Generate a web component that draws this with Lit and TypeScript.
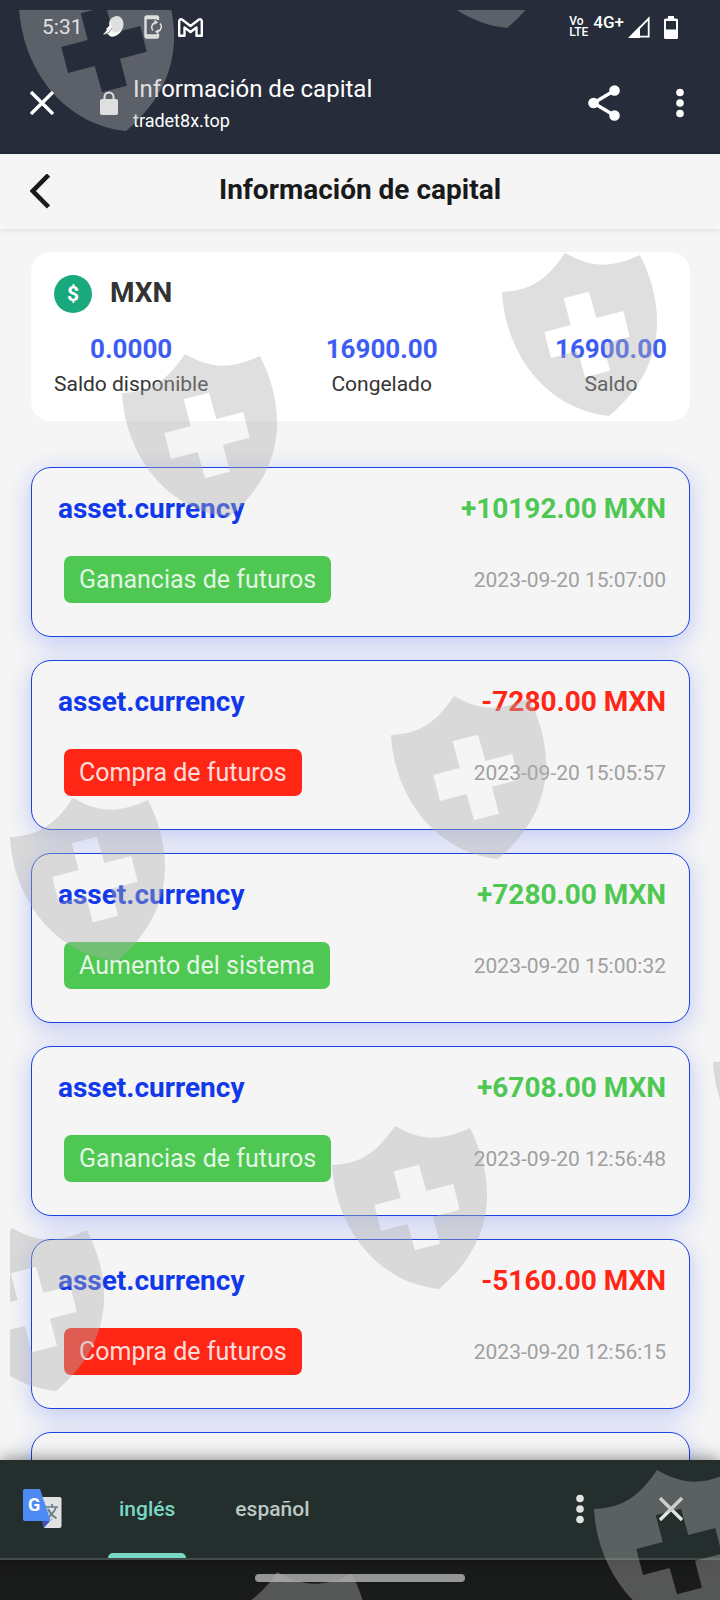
import { LitElement, html, css, svg } from "lit";
import { customElement, property } from "lit/decorators.js";

interface Movement {
  amount: string;
  kind: string;
  date: string;
}

const MOVEMENTS: Movement[] = [
  { amount: "+10192.00", kind: "Ganancias de futuros", date: "2023-09-20 15:07:00" },
  { amount: "-7280.00", kind: "Compra de futuros", date: "2023-09-20 15:05:57" },
  { amount: "+7280.00", kind: "Aumento del sistema", date: "2023-09-20 15:00:32" },
  { amount: "+6708.00", kind: "Ganancias de futuros", date: "2023-09-20 12:56:48" },
  { amount: "-5160.00", kind: "Compra de futuros", date: "2023-09-20 12:56:15" },
  { amount: "", kind: "", date: "" },
];

const BALANCES = [
  { value: "0.0000", label: "Saldo disponible" },
  { value: "16900.00", label: "Congelado" },
  { value: "16900.00", label: "Saldo" },
];

// Top-left corner of every shield on the watermark layer.
const SHIELDS = [
  [19, -32], [400, -135], [502, 253], [122, 354], [391, 696], [10, 798],
  [713, 1023], [332, 1126], [-51, 1228], [594, 1470], [214, 1572],
];

const SHIELD_PATH =
  "M0 39C25 37.500 42 31 63 0C90 15 108 15.500 138 2C162 50 168 112 107 163C42 156 3 98 0 39Z" +
  "M61.700 45.300L68.700 72L42.300 79L49 105L75.700 98L83 124.300L108 117.700L101 90.700L127.700 83.700L121.300 58L94.300 65L87 38.700Z";

const dots = html`<svg width="8" height="30" viewBox="0 0 8 30" fill="currentColor" aria-hidden="true">
  <circle cx="4" cy="4.500" r="3.800" /><circle cx="4" cy="15" r="3.800" /><circle cx="4" cy="25.500" r="3.800" />
</svg>`;

const cross = html`<svg width="24" height="24" viewBox="0 0 24 24" fill="none" stroke="currentColor" stroke-width="3.400" aria-hidden="true">
  <path d="M1 1L23 23M23 1L1 23" />
</svg>`;

@customElement("status-bar")
class StatusBar extends LitElement {
  static styles = css`
    :host {
      display: flex;
      align-items: center;
      justify-content: space-between;
      height: 54px;
      padding: 0 42px;
      box-sizing: border-box;
    }
    .group { display: flex; align-items: center; }
    .time { font-size: 21px; line-height: 24px; margin-right: 20px; }
    .phone { margin: 0 16px 0 20px; }
    .volte { font-size: 12px; line-height: 11px; font-weight: 500; margin-right: 5px; }
    .net { font-size: 17px; line-height: 20px; padding-bottom: 10px; font-weight: 500; margin-right: 4px; }
    .signal { margin-right: 14px; }
    svg { display: block; }
  `;
  render() {
    return html`
      <div class="group">
        <span class="time">5:31</span>
        <svg width="21" height="22" viewBox="0 0 21 22" fill="#fff">
          <path d="M7 4C9 1 12 0 14 0C18 0 20.500 4 20.500 8C20.500 14 16 19 11 20.500C8 21 6 20 5 18L0 18.500L4 14L3 13L6.500 9.500C6 8 6.200 6 7 4Z" />
          <path d="M1 18.500L6 16.500L9 12" stroke="#5c636a" fill="none" stroke-width=".8" />
        </svg>
        <svg class="phone" width="18" height="24" viewBox="0 0 18 24" fill="none" stroke="#fff">
          <path d="M14 5V2.500Q14 1.500 13 1.500H3Q1.500 1.500 1.500 3V21Q1.500 22.500 3 22.500H13Q14 22.500 14 21.500V19" stroke-width="2.400" />
          <path d="M2 3H14M2 20.500H14" stroke-width="2.600" />
          <path d="M11 7.500A5 5 0 0 0 9 15.500M14 16.500A5 5 0 0 0 16 8.500" stroke-width="1.500" />
          <path d="M10.500 4.500L14 7.300L10.500 10ZM14.500 14L11 16.700L14.500 19.500Z" fill="#fff" stroke="none" />
        </svg>
        <svg width="25" height="19" viewBox="0 0 25 19" fill="none" stroke="#fff" stroke-width="2.400" stroke-linejoin="round">
          <path d="M1.200 3Q2 .5 4 1.500L12.500 8L21 1.500Q23 .5 23.800 3V17.800H18.500V9.500L12.500 14L6.500 9.500V17.800H1.200Z" />
        </svg>
      </div>
      <div class="group">
        <span class="volte">Vo<br />LTE</span>
        <span class="net">4G+</span>
        <svg class="signal" width="22" height="22" viewBox="0 0 22 22">
          <path d="M20.700 2.500V20.700H3Z" fill="none" stroke="#fff" stroke-width="1.800" />
          <path d="M0 22L12 10V22Z" fill="#fff" />
        </svg>
        <svg width="14" height="23" viewBox="0 0 14 23">
          <path d="M4 0H10V2.500H12.500Q14 2.500 14 4V21.500Q14 23 12.500 23H1.500Q0 23 0 21.500V4Q0 2.500 1.500 2.500H4ZM2 5V13.500H12V5Z" fill="#fff" fill-rule="evenodd" />
        </svg>
      </div>
    `;
  }
}

@customElement("movement-card")
class MovementCard extends LitElement {
  @property({ attribute: false }) item!: Movement;
  static styles = css`
    :host {
      display: block;
      box-sizing: border-box;
      flex: none;
      min-height: 170px;
      padding: 24px 23px 33px 26px;
      border: 1px solid #1a42e0;
      border-radius: 20px;
      background: #f5f5f5;
      box-shadow: 0 6px 24px rgba(20, 60, 255, 0.24);
    }
    .row { display: flex; align-items: center; justify-content: space-between; }
    .top { font-size: 28px; line-height: 34px; font-weight: 700; margin-bottom: 30px; }
    .name { color: #1138eb; }
    .up { color: #4fc853; }
    .down { color: #ff2615; }
    .tag {
      margin-left: 6px;
      padding: 0 15px;
      border-radius: 7px;
      font-size: 25px;
      line-height: 47px;
    }
    .tag.up { background: #4fc853; color: rgba(255, 255, 255, 0.86); }
    .tag.down { background: #ff2615; color: rgba(255, 255, 255, 0.86); }
    .date { font-size: 21px; line-height: 26px; color: #a0a0a0; }
  `;
  render() {
    const { amount, kind, date } = this.item;
    if (!amount) return html``;
    const tone = amount.startsWith("+") ? "up" : "down";
    return html`
      <div class="row top">
        <span class="name">asset.currency</span>
        <span class=${tone}>${amount} MXN</span>
      </div>
      <div class="row">
        <span class="tag ${tone}">${kind}</span>
        <time class="date">${date}</time>
      </div>
    `;
  }
}

@customElement("app-root")
class AppRoot extends LitElement {
  static styles = css`
    :host {
      display: flex;
      flex-direction: column;
      position: relative;
      height: 100vh;
      overflow: hidden;
      background: #f5f5f5;
      color: #333;
      font-family: Roboto, "Liberation Sans", sans-serif;
    }
    button {
      display: flex;
      align-items: center;
      justify-content: center;
      padding: 0;
      border: 0;
      background: none;
      color: inherit;
      font: inherit;
    }
    svg { display: block; }
    .browser { flex: none; background: #262c3a; color: #fff; border-bottom: 2px solid #202935; }
    .toolbar { display: flex; align-items: center; height: 98px; padding: 0 36px 0 30px; }
    .lock { margin: 0 15px 0 46px; }
    .site { flex: 1; padding-top: 4px; }
    .site-title { font-size: 24px; line-height: 32px; }
    .site-url { font-size: 18px; line-height: 32px; }
    .share { margin-right: 56px; }

    .header {
      flex: none;
      display: grid;
      grid-template-columns: 20px 1fr 20px;
      align-items: center;
      height: 75px;
      padding: 0 30px;
      box-shadow: 0 1px 6px rgba(0, 0, 0, 0.1);
      color: #1a1a1a;
    }
    .title { margin: 0; padding-bottom: 4px; text-align: center; font-size: 28px; line-height: 36px; font-weight: 700; }

    .content {
      flex: 1;
      min-height: 0;
      overflow: hidden;
      display: flex;
      flex-direction: column;
      gap: 23px;
      padding: 23px 30px 0 31px;
    }
    .summary {
      flex: none;
      padding: 23px 23px 20px;
      margin-bottom: 23px;
      border-radius: 20px;
      background: #fff;
    }
    .currency { display: flex; align-items: center; gap: 18px; height: 38px; margin-bottom: 18px; }
    .code { margin: 0; padding-bottom: 2px; font-size: 28px; line-height: 36px; font-weight: 700; }
    .balances { display: flex; justify-content: space-between; margin: 0; }
    .balance { display: flex; flex-direction: column-reverse; text-align: center; }
    .value { margin: 0; font-size: 26px; line-height: 36px; font-weight: 700; color: #3d5df2; }
    .label { font-size: 21px; line-height: 34px; }

    .translate {
      flex: none;
      position: relative;
      display: flex;
      align-items: center;
      height: 98px;
      padding: 0 37px 0 22px;
      border-bottom: 2px solid #424b49;
      background: #242e2d;
      box-shadow: 0 0 16px rgba(0, 0, 0, 0.5);
      color: #e1e4e2;
    }
    .tabs { display: flex; flex: 1; gap: 38px; align-self: stretch; padding-left: 46px; }
    .tab { position: relative; padding: 0 11px; font-size: 21px; font-weight: 500; color: #bcc9c3; }
    .tab.active { color: #78d8c3; }
    .tab.active::after {
      content: "";
      position: absolute;
      left: 0;
      right: 0;
      bottom: 0;
      height: 5px;
      border-radius: 5px 5px 0 0;
      background: #78d8c3;
    }
    .options { margin-right: 75px; }
    .nav { flex: none; display: flex; justify-content: center; height: 26px; padding-top: 14px; background: #1a1c1b; }
    .handle { width: 210px; height: 8px; border-radius: 4px; background: #969897; }

    .watermark {
      position: absolute;
      inset: 10px 0 0 10px;
      overflow: hidden;
      pointer-events: none;
    }
    .watermark svg { width: 100%; height: 100%; }
  `;

  render() {
    return html`
      <div class="browser">
        <status-bar></status-bar>
        <div class="toolbar">
          <button aria-label="Cerrar">${cross}</button>
          <svg class="lock" width="18" height="24" viewBox="0 0 18 24" fill="#fff">
            <path d="M2 8H16Q18 8 18 10V22Q18 24 16 24H2Q0 24 0 22V10Q0 8 2 8Z" />
            <path d="M4.500 9V6A4.500 4.500 0 0 1 13.500 6V9" fill="none" stroke="#fff" stroke-width="2" />
          </svg>
          <div class="site">
            <div class="site-title">Información de capital</div>
            <div class="site-url">tradet8x.top</div>
          </div>
          <button class="share" aria-label="Compartir">
            <svg width="32" height="36" viewBox="0 0 32 36" fill="#fff">
              <path d="M26.500 5.500L5.500 18L26.500 30.500" fill="none" stroke="#fff" stroke-width="3.400" />
              <circle cx="26.500" cy="5.500" r="5.300" /><circle cx="5.500" cy="18" r="5.300" /><circle cx="26.500" cy="30.500" r="5.300" />
            </svg>
          </button>
          <button aria-label="Más opciones">${dots}</button>
        </div>
      </div>

      <header class="header">
        <button aria-label="Volver">
          <svg width="20" height="36" viewBox="0 0 20 36" fill="none" stroke="#1a1a1a" stroke-width="4.600">
            <path d="M18.500 1L2.800 17L18.500 33" />
          </svg>
        </button>
        <h1 class="title">Información de capital</h1>
      </header>

      <main class="content">
        <section class="summary">
          <div class="currency">
            <svg width="38" height="38" viewBox="0 0 38 38">
              <circle cx="19" cy="19" r="19" fill="#1aa97c" />
              <text x="19" y="26" text-anchor="middle" font-size="21" font-weight="700" fill="#fff">$</text>
            </svg>
            <h2 class="code">MXN</h2>
          </div>
          <dl class="balances">
            ${BALANCES.map(
              (b) => html`<div class="balance"><dt class="label">${b.label}</dt><dd class="value">${b.value}</dd></div>`
            )}
          </dl>
        </section>
        ${MOVEMENTS.map((m) => html`<movement-card .item=${m}></movement-card>`)}
      </main>

      <div class="translate">
        <svg width="40" height="40" viewBox="0 0 40 40">
          <path d="M17 8H37.500Q39.500 8 39.500 10V37Q39.500 39 37.500 39H22Z" fill="#e1e1e1" />
          <path d="M20 8L31 31L26 32Z" fill="#c9cacb" />
          <g fill="none" stroke="#607d8b" stroke-width="1.700">
            <path d="M23 18H36M30 15V18M34 18.500Q31.500 25 24 30M26 20Q29 26 34.500 29.500" />
          </g>
          <path d="M20 32H28L22 39Z" fill="#3f51b5" />
          <path d="M3 0H18L28.500 32H3Q1 32 1 30V2Q1 0 3 0Z" fill="#4c8bf5" />
          <text x="6" y="22" font-size="18" font-weight="700" fill="#fff">G</text>
        </svg>
        <div class="tabs">
          <button class="tab active">inglés</button>
          <button class="tab">español</button>
        </div>
        <button class="options" aria-label="Opciones de traducción">${dots}</button>
        <button aria-label="Cerrar traductor">${cross}</button>
      </div>
      <div class="nav"><div class="handle"></div></div>

      <div class="watermark" aria-hidden="true">
        <svg fill="#b0b0b0" fill-opacity=".4">
          ${SHIELDS.map(([x, y]) => svg`<path d=${SHIELD_PATH} transform="translate(${x - 10} ${y - 10})" />`)}
        </svg>
      </div>
    `;
  }
}
